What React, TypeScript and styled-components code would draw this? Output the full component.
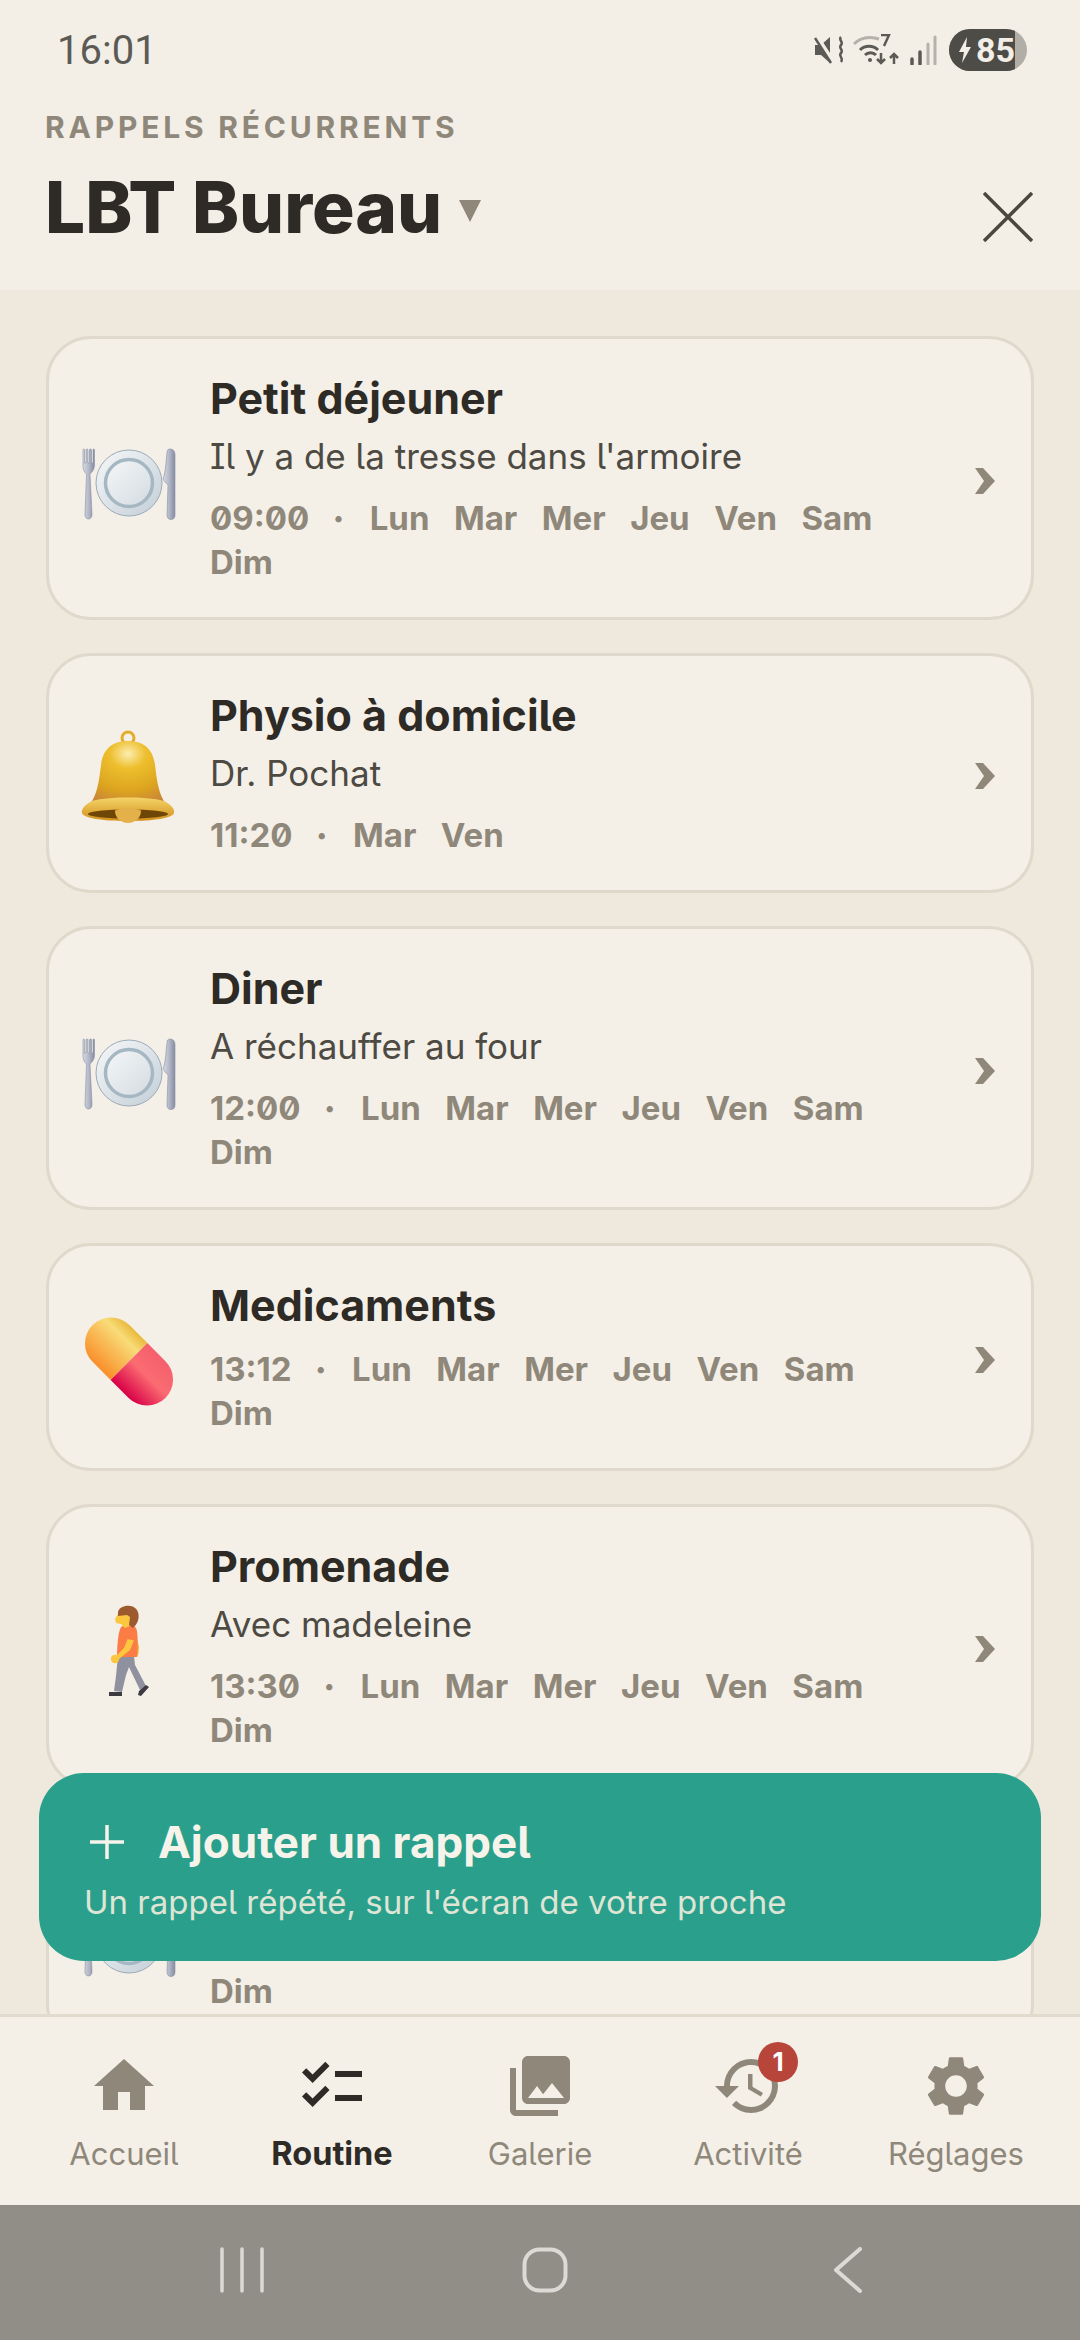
import React from "react";
import styled, { createGlobalStyle } from "styled-components";
import { MdHome, MdChecklist, MdPhotoLibrary, MdHistory, MdSettings } from "react-icons/md";

const GlobalStyle = createGlobalStyle`
  html, body { margin: 0; padding: 0; background: #f3efe7; }
  * { box-sizing: border-box; }
  body { font-family: "Inter", "Noto Sans", sans-serif; font-feature-settings: "zero", "ss02", "cv08"; }
`;

const muted = "#8f887a";
const ink = "#2e2b26";

const Plate = () => (
  <svg viewBox="0 0 100 100" width="100" height="100">
    <defs>
      <linearGradient id="steel" x1="0" y1="0" x2="1" y2="0">
        <stop offset="0" stopColor="#d7dae2" />
        <stop offset="0.5" stopColor="#b4b9c8" />
        <stop offset="1" stopColor="#858ca3" />
      </linearGradient>
      <linearGradient id="dish" x1="0" y1="0" x2="1" y2="1">
        <stop offset="0" stopColor="#f6f8f9" />
        <stop offset="1" stopColor="#c3ced7" />
      </linearGradient>
      <linearGradient id="well" x1="0" y1="0" x2="1" y2="1">
        <stop offset="0" stopColor="#f5f7f8" />
        <stop offset="1" stopColor="#d3dbe0" />
      </linearGradient>
    </defs>
    <path d="M3 17c0-1.500 1.500-1.500 1.500 0v13h1.500V17c0-1.500 2-1.500 2 0v13h1.500V17c0-1.500 2-1.500 2 0v13h1.500V17c0-1.500 1.500-1.500 1.500 0v15c0 4-2 7-4.500 9L12 81c.3 3-1.500 5-3.500 5S4.700 84 5 81l1.500-40C4 39 3 36 3 32z" fill="url(#steel)" stroke="#8a90a4" strokeWidth="0.600" />
    <circle cx="49" cy="50" r="33" fill="url(#dish)" stroke="#9daab7" strokeWidth="1" />
    <circle cx="49" cy="50" r="23.500" fill="url(#well)" stroke="#a6b7c4" strokeWidth="3.500" />
    <path d="M90 16c3.500 0 5 2.500 5 6v60c0 3-1.500 4.500-4 4.500s-4-1.500-4-4.500l1-30c-2-2-4-4-5-6 3-8 3-20 4-26 0-3 1-4 3-4z" fill="url(#steel)" stroke="#8a90a4" strokeWidth="0.600" />
  </svg>
);

const Bell = () => (
  <svg viewBox="0 0 100 100" width="100" height="100">
    <defs>
      <radialGradient id="gold" cx="0.5" cy="0.2" r="0.85">
        <stop offset="0" stopColor="#fdeeb0" />
        <stop offset="0.28" stopColor="#edbf2e" />
        <stop offset="0.7" stopColor="#dca41e" />
        <stop offset="1" stopColor="#c9843a" />
      </radialGradient>
      <linearGradient id="rim" x1="0" y1="0" x2="0" y2="1">
        <stop offset="0" stopColor="#f4d468" />
        <stop offset="1" stopColor="#d28f1c" />
      </linearGradient>
    </defs>
    <circle cx="48" cy="10" r="6" fill="none" stroke="#e0ad2c" strokeWidth="3" />
    <path d="M48 13c-17 0-25 9-27 24-2 17-4 30-11 39h76c-7-9-9-22-11-39-2-15-10-24-27-24z" fill="url(#gold)" />
    <path d="M10 74c10-6 66-6 76 0 5 3 9 7 8 11-1 5-20 8-46 8s-45-3-46-8c-1-4 3-8 8-11z" fill="url(#rim)" />
    <ellipse cx="48" cy="86" rx="40" ry="4.500" fill="#6e4708" />
    <path d="M35 83c0-3 26-3 26 0 0 7-6 12-13 12s-13-5-13-12z" fill="#e4b04a" />
  </svg>
);

const Pill = () => (
  <svg viewBox="0 0 100 100" width="100" height="100">
    <defs>
      <linearGradient id="capA" x1="0" y1="0" x2="0" y2="1">
        <stop offset="0" stopColor="#eab93c" />
        <stop offset="0.25" stopColor="#f8dc78" />
        <stop offset="1" stopColor="#f98f2a" />
      </linearGradient>
      <linearGradient id="capB" x1="0" y1="0" x2="0" y2="1">
        <stop offset="0" stopColor="#f4606c" />
        <stop offset="0.45" stopColor="#fb6c72" />
        <stop offset="1" stopColor="#d80047" />
      </linearGradient>
    </defs>
    <g transform="rotate(45 49 49.500)">
      <path d="M49 23.500H23.500a26 26 0 0 0 0 52H49z" fill="url(#capA)" />
      <path d="M49 23.500h25.500a26 26 0 0 1 0 52H49z" fill="url(#capB)" />
    </g>
  </svg>
);

const Walker = () => (
  <svg viewBox="0 0 100 100" width="100" height="100">
    <path d="M38 55l-2 20-2 15 8 1 4-17 3-8 11 23 6-4-11-21-1-9z" fill="#8f919f" />
    <path d="M29 91h13v4H29zM59 90l7-6 3 2-8 9-3-1z" fill="#3b3b41" />
    <path d="M56 34l3 12-1 10-3-8z" fill="#f0b32e" />
    <path d="M41 26c5-3 12-3 15 1 2 3 2 19 1 29H37c0-10 1-25 4-30z" fill="#fb7d45" />
    <path d="M50 32c3-1 6 1 5 5l-5 12-11 9-3-3 8-8z" fill="#fcc63f" />
    <path d="M47 29c3-2 8-2 9 2l1 9-10-2z" fill="#fb7d45" />
    <circle cx="35" cy="58" r="4.200" fill="#fcc63f" />
    <path d="M38 13h12v12l-5 2-4-4-5-1-1-4z" fill="#fcc63f" />
    <path d="M38 11c1-7 15-9 19-2 3 5 2 13-4 18l-4-3 1-8-3-2-9 1z" fill="#9c5a2e" />
  </svg>
);

const allDays = ["Lun", "Mar", "Mer", "Jeu", "Ven", "Sam", "Dim"];

type Reminder = {
  id: number;
  icon: React.ReactNode;
  title: string;
  note?: string;
  time?: string;
  days: string[];
};

const reminders: Reminder[] = [
  { id: 1, icon: <Plate />, title: "Petit déjeuner", note: "Il y a de la tresse dans l'armoire", time: "09:00", days: allDays },
  { id: 2, icon: <Bell />, title: "Physio à domicile", note: "Dr. Pochat", time: "11:20", days: ["Mar", "Ven"] },
  { id: 3, icon: <Plate />, title: "Diner", note: "A réchauffer au four", time: "12:00", days: allDays },
  { id: 4, icon: <Pill />, title: "Medicaments", time: "13:12", days: allDays },
  { id: 5, icon: <Walker />, title: "Promenade", note: "Avec madeleine", time: "13:30", days: allDays },
  // the button covers the top of this last card, only "Dim" shows below it
  { id: 6, icon: <Plate />, title: "\u00a0", days: ["Dim"] },
];

const tabs = [
  { label: "Accueil", icon: <MdHome /> },
  { label: "Routine", icon: <MdChecklist />, active: true },
  { label: "Galerie", icon: <MdPhotoLibrary /> },
  { label: "Activité", icon: <MdHistory />, badge: 1 },
  { label: "Réglages", icon: <MdSettings /> },
];

const App: React.FC = () => (
  <Screen>
    <GlobalStyle />
    <StatusBar>
      <Clock>16:01</Clock>
      <StatusIcons>
        <svg width="30" height="30" viewBox="0 0 30 30">
          <path d="M1 10h6l9-8v26l-9-8H1z" fill="#5b5a55" />
          <path d="M2 1l17 26" stroke="#f3efe7" strokeWidth="5" />
          <path d="M1 3l16 25" stroke="#5b5a55" strokeWidth="2.500" />
          <path d="M27 2c-3 3 3 5 0 8s3 5 0 8 3 5 0 9" fill="none" stroke="#5b5a55" strokeWidth="2.500" />
        </svg>
        <svg width="48" height="32" viewBox="0 0 48 32">
          <path d="M1 10c7-7 17-8 25-5" fill="none" stroke="#b5b2ab" strokeWidth="3" />
          <path d="M7 16c5-5 13-5 18 0M12 21c3-3 8-3 11 0" fill="none" stroke="#5b5a55" strokeWidth="3" />
          <circle cx="17" cy="26" r="2" fill="#5b5a55" />
          <path d="M28 1h8l-5 11" fill="none" stroke="#5b5a55" strokeWidth="2.500" />
          <path d="M28 19v10m-4-4l4 4 4-4M41 30V20m-4 4l4-4 4 4" fill="none" stroke="#5b5a55" strokeWidth="2.500" />
        </svg>
        <svg width="27" height="30" viewBox="0 0 27 30">
          <path d="M2 24v5" stroke="#5b5a55" strokeWidth="3.500" strokeLinecap="round" />
          <path d="M10 17v12" stroke="#5b5a55" strokeWidth="3.500" strokeLinecap="round" />
          <path d="M18 9v20M25 2v27" stroke="#b5b2ab" strokeWidth="3" strokeLinecap="round" />
        </svg>
        <Battery>
          <BatteryFill>
            <svg width="16" height="28" viewBox="0 0 16 28">
              <path d="M10 1L2 16h5l-2 11 9-16H9z" fill="#f3efe7" />
            </svg>
            85
          </BatteryFill>
        </Battery>
      </StatusIcons>
    </StatusBar>

    <Header>
      <Eyebrow>RAPPELS RÉCURRENTS</Eyebrow>
      <TitleRow>
        <PageTitle>LBT Bureau</PageTitle>
        <Caret />
        <CloseIcon viewBox="0 0 50 50">
          <path d="M1 1l48 48M49 1L1 49" stroke="#4a473f" strokeWidth="3.500" fill="none" />
        </CloseIcon>
      </TitleRow>
    </Header>

    <List>
      {reminders.map((r) => (
        <Card key={r.id}>
          <EmojiSlot>{r.icon}</EmojiSlot>
          <CardBody>
            <CardTitle>{r.title}</CardTitle>
            {r.note && <CardNote>{r.note}</CardNote>}
            <Meta $covered={!r.time}>
              {r.time && <span>{r.time}</span>}
              {r.time && <MetaDot>•</MetaDot>}
              {r.days.map((d) => (
                <span key={d}>{d}</span>
              ))}
            </Meta>
          </CardBody>
          <Chevron viewBox="0 0 22 28" $hidden={!r.time}>
            <path d="M1 1h8l12 13L9 27H1l9-13z" fill={muted} />
          </Chevron>
        </Card>
      ))}
      <AddButton>
        <AddTitle>
          <svg width="36" height="36" viewBox="0 0 36 36">
            <path d="M18 1v34M1 18h34" stroke="#f6f3ea" strokeWidth="3.500" />
          </svg>
          Ajouter un rappel
        </AddTitle>
        <AddHint>Un rappel répété, sur l'écran de votre proche</AddHint>
      </AddButton>
    </List>

    <TabBar>
      {tabs.map((t) => (
        <Tab key={t.label} $active={t.active}>
          <TabIcon>
            {t.icon}
            {t.badge && <Badge>{t.badge}</Badge>}
          </TabIcon>
          <span>{t.label}</span>
        </Tab>
      ))}
    </TabBar>

    <SystemBar>
      <svg width="44" height="46" viewBox="0 0 44 46">
        <path d="M2 2v42M22 2v42M42 2v42" stroke="#dcdad5" strokeWidth="3.500" strokeLinecap="round" />
      </svg>
      <svg width="46" height="46" viewBox="0 0 46 46">
        <rect x="2.500" y="2.500" width="41" height="41" rx="15" fill="none" stroke="#dcdad5" strokeWidth="4" />
      </svg>
      <svg width="30" height="46" viewBox="0 0 30 46">
        <path d="M27 2L3 23l24 21" fill="none" stroke="#dcdad5" strokeWidth="4" strokeLinecap="round" strokeLinejoin="round" />
      </svg>
    </SystemBar>
  </Screen>
);

export default App;

const Screen = styled.div`
  width: 1080px;
  height: 2340px;
  display: flex;
  flex-direction: column;
  overflow: hidden;
  background: #f3efe7;
`;

const StatusBar = styled.div`
  height: 100px;
  padding: 0 53px 0 57px;
  display: flex;
  align-items: center;
  justify-content: space-between;
`;

const Clock = styled.span`
  font-family: "Roboto", sans-serif;
  font-size: 40px;
  color: #5b5a55;
`;

const StatusIcons = styled.div`
  display: flex;
  align-items: center;
  gap: 9px;
`;

const Battery = styled.div`
  width: 78px;
  height: 42px;
  margin-left: 3px;
  border-radius: 21px;
  background: #b1aea7;
  overflow: hidden;
`;

const BatteryFill = styled.div`
  width: 66px;
  height: 42px;
  padding-left: 8px;
  display: flex;
  align-items: center;
  gap: 3px;
  background: #4d4c47;
  color: #f3efe7;
  font-family: "Roboto", sans-serif;
  font-size: 34px;
  font-weight: 700;
`;

const Header = styled.header`
  height: 190px;
  padding: 8px 47px 0 45px;
`;

const Eyebrow = styled.div`
  font-size: 30px;
  line-height: 38px;
  font-weight: 700;
  letter-spacing: 3.8px;
  color: ${muted};
`;

const TitleRow = styled.div`
  margin-top: 16px;
  display: flex;
  align-items: center;
`;

const PageTitle = styled.h1`
  margin: 0;
  font-size: 71px;
  line-height: 90px;
  font-weight: 800;
  color: ${ink};
`;

const Caret = styled.span`
  width: 0;
  height: 0;
  margin: 8px 0 0 17px;
  border-left: 11px solid transparent;
  border-right: 11px solid transparent;
  border-top: 22px solid ${muted};
`;

const CloseIcon = styled.svg`
  width: 50px;
  height: 50px;
  margin: 20px 0 0 auto;
`;

const List = styled.main`
  position: relative;
  flex: 1;
  min-height: 0;
  overflow: hidden;
  padding: 46px 46px 0;
  display: flex;
  flex-direction: column;
  gap: 33px;
  background: #efe9dd;
`;

const Card = styled.article`
  flex: none;
  display: flex;
  align-items: center;
  padding: 33px 35px 33px 31px;
  border: 3px solid #dfd9cb;
  border-radius: 45px;
  background: #f4f0e8;
`;

const EmojiSlot = styled.div`
  flex: none;
  width: 100px;
  height: 100px;
  margin-top: 10px;
`;

const CardBody = styled.div`
  flex: 1;
  min-width: 0;
  margin-left: 30px;
  padding-right: 50px;
`;

const CardTitle = styled.div`
  font-size: 43px;
  line-height: 52px;
  font-weight: 700;
  color: ${ink};
`;

const CardNote = styled.div`
  margin-top: 8px;
  font-size: 35px;
  line-height: 48px;
  color: #4d4a43;
`;

const Meta = styled.div<{ $covered?: boolean }>`
  margin-top: 16px;
  padding-top: ${(p) => (p.$covered ? "44px" : "0")};
  display: flex;
  flex-wrap: wrap;
  column-gap: 24.5px;
  font-size: 33px;
  line-height: 44px;
  font-weight: 700;
  color: ${muted};
`;

const MetaDot = styled.span`
  margin-right: 2px;
  font-size: 20px;
`;

const Chevron = styled.svg<{ $hidden?: boolean }>`
  flex: none;
  width: 22px;
  height: 28px;
  margin-top: 6px;
  visibility: ${(p) => (p.$hidden ? "hidden" : "visible")};
`;

const AddButton = styled.button`
  position: absolute;
  left: 39px;
  right: 39px;
  bottom: 53px;
  height: 188px;
  padding: 4px 45px 0;
  display: flex;
  flex-direction: column;
  justify-content: center;
  align-items: flex-start;
  gap: 12px;
  border: 0;
  border-radius: 45px;
  background: #2aa08c;
  font: inherit;
`;

const AddTitle = styled.div`
  display: flex;
  align-items: center;
  gap: 33px;
  margin-left: 5px;
  font-size: 44px;
  line-height: 54px;
  font-weight: 700;
  color: #f6f3ea;
`;

const AddHint = styled.div`
  font-size: 33px;
  line-height: 42px;
  color: #dfe5d5;
`;

const TabBar = styled.nav`
  height: 191px;
  padding: 0 20px;
  display: grid;
  grid-template-columns: repeat(5, 1fr);
  border-top: 3px solid #e0dbcd;
  background: #f4f0e8;
`;

const Tab = styled.div<{ $active?: boolean }>`
  display: flex;
  flex-direction: column;
  align-items: center;
  padding-top: 33px;
  font-size: ${(p) => (p.$active ? "32.500px" : "31px")};
  line-height: 44px;
  font-weight: ${(p) => (p.$active ? 700 : 400)};
  color: ${(p) => (p.$active ? ink : muted)};
`;

const TabIcon = styled.div`
  position: relative;
  height: 72px;
  margin-bottom: 10px;
  font-size: 72px;
  line-height: 0;
`;

const Badge = styled.span`
  position: absolute;
  top: -8px;
  right: -14px;
  width: 40px;
  height: 40px;
  border-radius: 50%;
  display: flex;
  align-items: center;
  justify-content: center;
  background: #b8453a;
  color: #fff;
  font-size: 26px;
  line-height: 40px;
  font-weight: 700;
`;

const SystemBar = styled.div`
  height: 135px;
  flex: none;
  padding: 0 0 5px 220px;
  display: grid;
  grid-template-columns: 302px 311px 30px;
  align-items: center;
  background: #918e88;
`;
